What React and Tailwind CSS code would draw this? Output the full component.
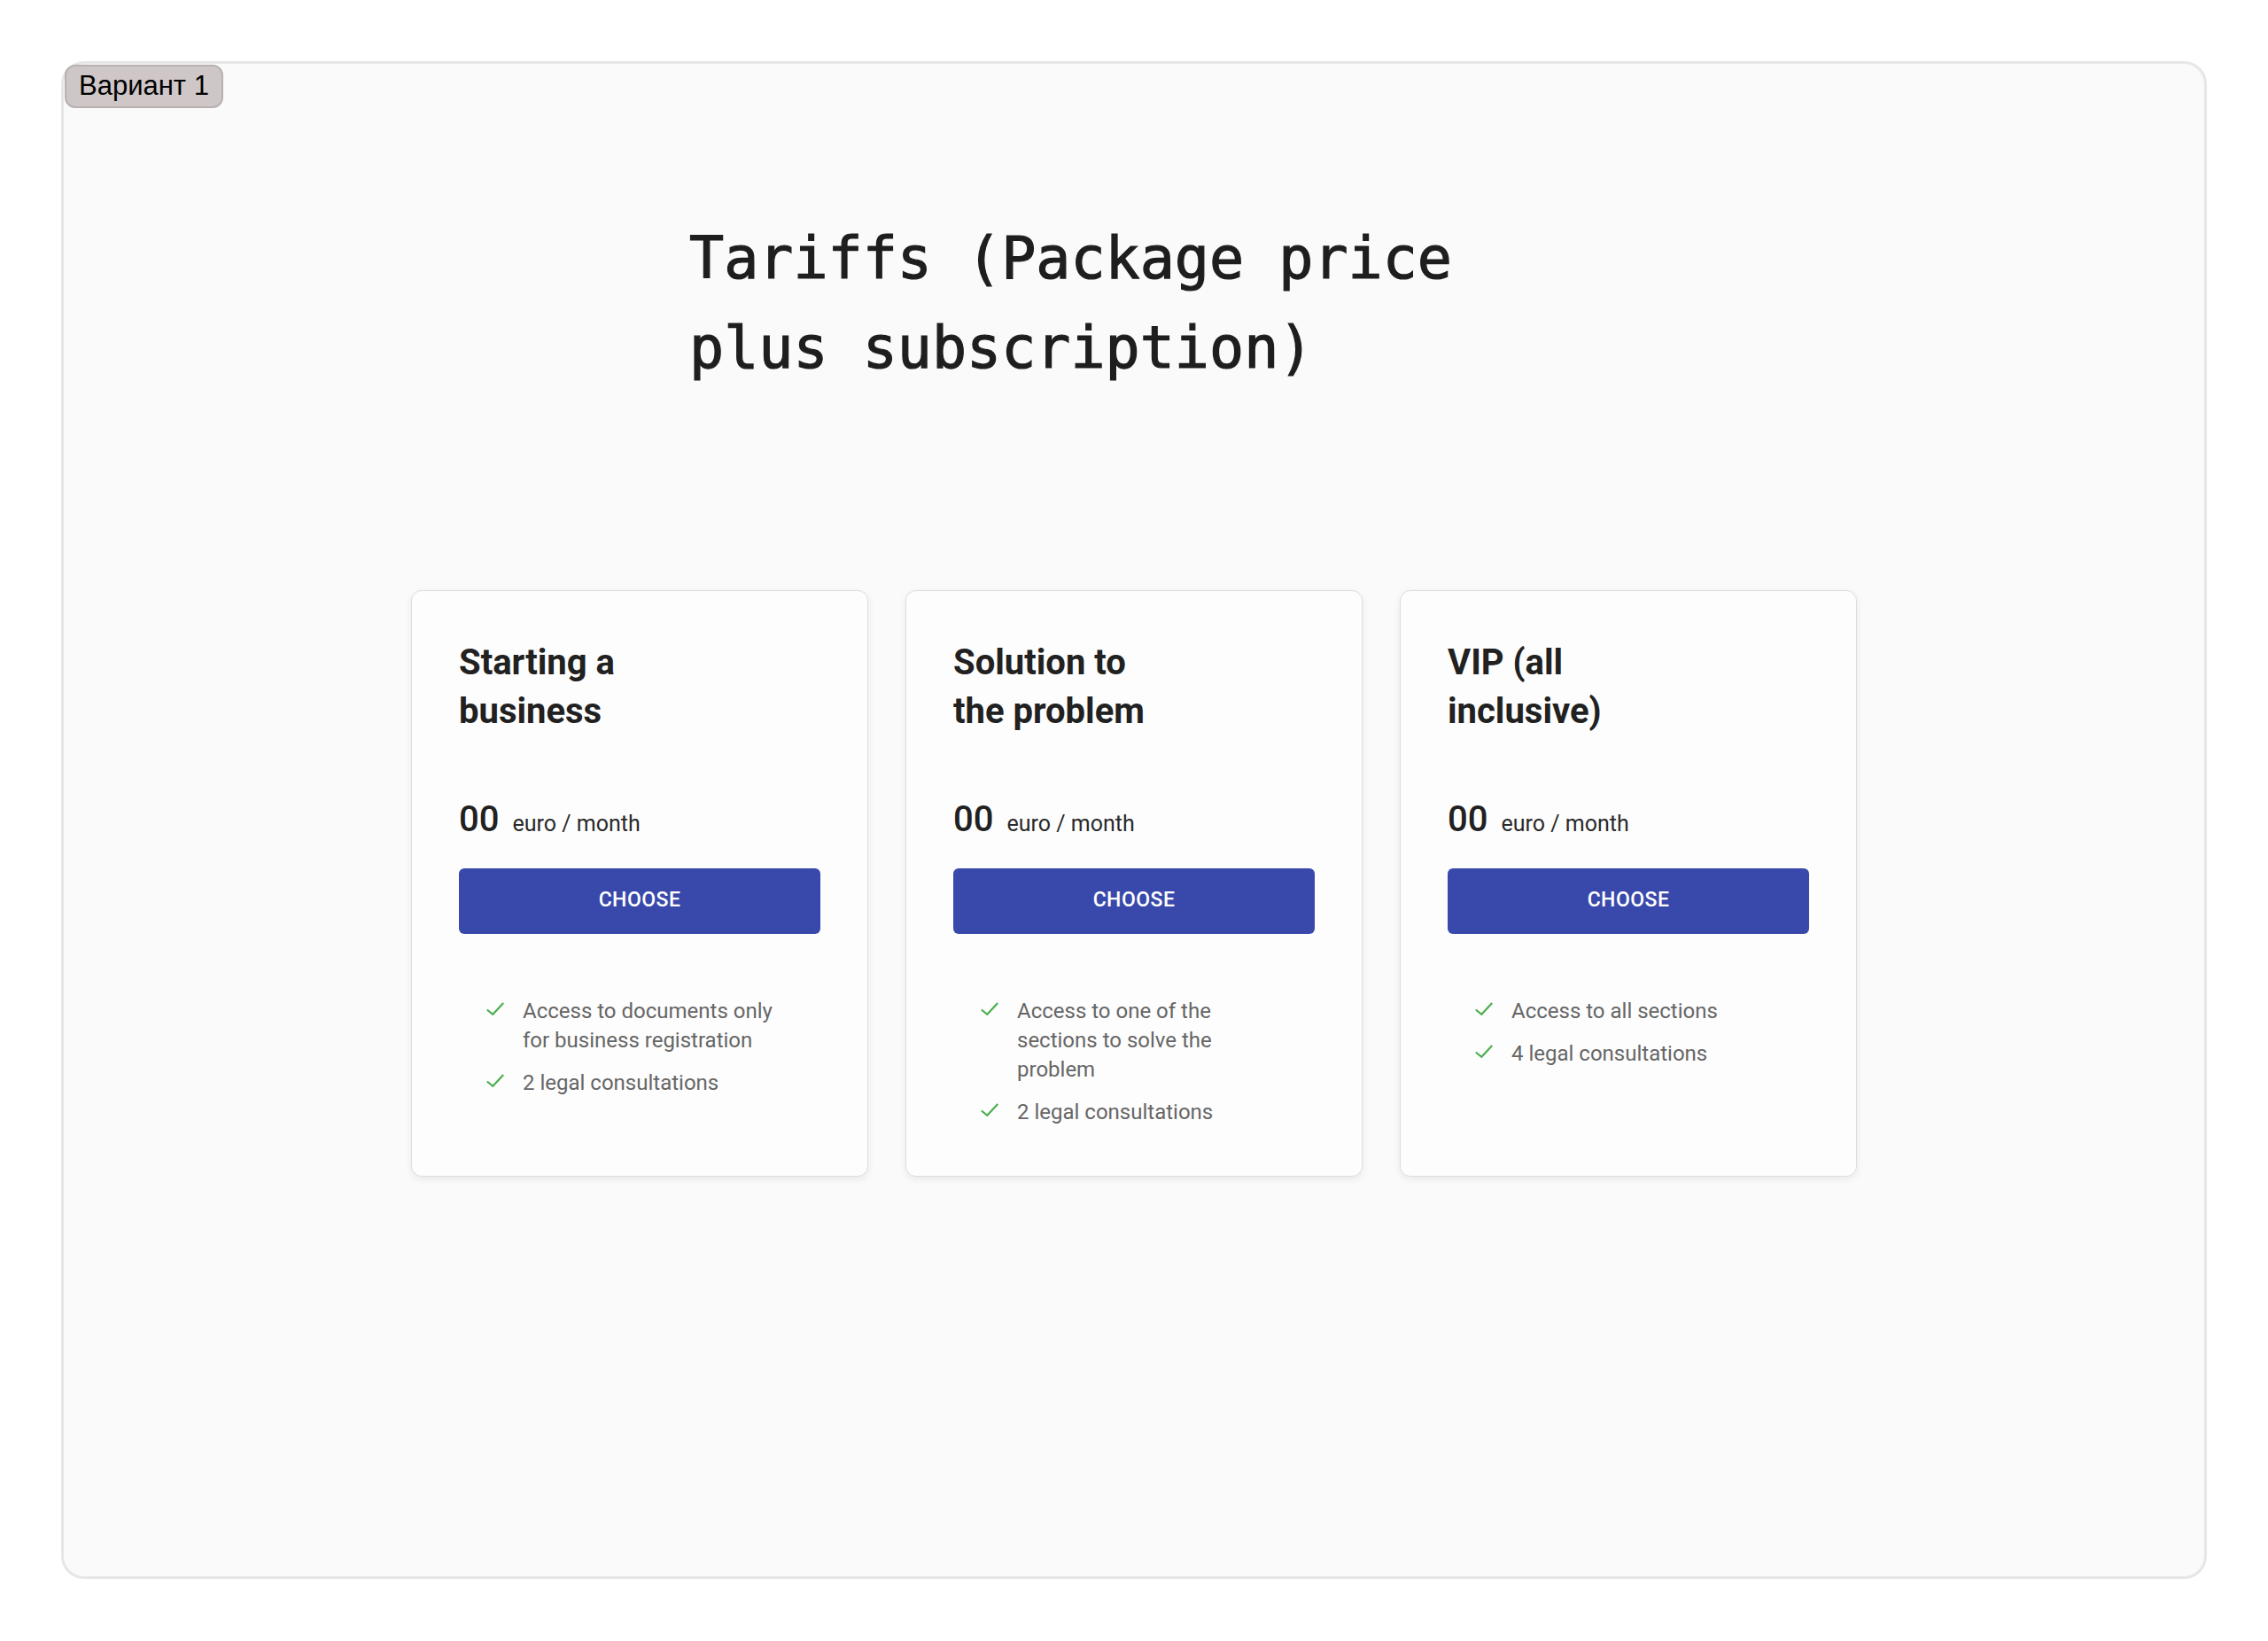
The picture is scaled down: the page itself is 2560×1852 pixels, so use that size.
import React from "react";

const plans = [
  {
    title: ["Starting a", "business"],
    features: ["Access to documents only for business registration", "2 legal consultations"],
  },
  {
    title: ["Solution to", "the problem"],
    features: ["Access to one of the sections to solve the problem", "2 legal consultations"],
  },
  {
    title: ["VIP (all", "inclusive)"],
    features: ["Access to all sections", "4 legal consultations"],
  },
];

function Check() {
  return (
    <svg width="20" height="15" viewBox="0 0 20 15" className="shrink-0 mt-[6px]" fill="none">
      <polyline points="0.8,8.5 7.3,13.8 19.2,1" stroke="#4caf50" strokeWidth="2.2" strokeLinecap="butt" strokeLinejoin="miter" />
    </svg>
  );
}

function Card({ plan }) {
  return (
    <div className="w-[516px] flex flex-col border border-[#dedede] rounded-[12px] bg-[#fdfdfd] shadow-[0_3px_8px_rgba(0,0,0,0.07)] p-[53px] pb-[55px] font-['Roboto',sans-serif]">
      <h2 className="text-[40px] leading-[55px] font-bold text-[#212121]">
        {plan.title[0]}
        <br />
        {plan.title[1]}
      </h2>
      <div className="mt-[73px] flex items-baseline">
        <span className="text-[40px] leading-[44px] font-medium text-[#212121]">00</span>
        <span className="ml-[15px] text-[25px] text-[#2a2a2a]">euro / month</span>
      </div>
      <button className="mt-[31px] h-[74px] w-full rounded-[6px] bg-[#3949ab] text-white text-[23px] font-medium tracking-[0.02em]">
        CHOOSE
      </button>
      <ul className="mt-[71px] pl-[31px] pr-[41px] flex flex-col gap-[15px]">
        {plan.features.map((f) => (
          <li key={f} className="flex items-start gap-[21px]">
            <Check />
            <span className="text-[24px] leading-[33px] text-[#666666]">{f}</span>
          </li>
        ))}
      </ul>
    </div>
  );
}

export default function App() {
  return (
    <div className="min-h-[1852px] bg-white p-[69px] pb-[70px]">
      <div className="relative h-[1713px] rounded-[26px] border-[3px] border-[#e6e6e6] bg-[#fafafa]">
        <div className="absolute left-[1px] top-[1px] h-[49px] px-[14px] flex items-center rounded-[12px] border-2 border-[#b9b0b0] bg-[#cfc7c7] font-['Liberation_Sans',Arial,sans-serif] text-[31px] text-black">
          Вариант 1
        </div>
        <div className="w-[1004px] mx-auto pt-[169px]">
          <h1 className="font-['DejaVu_Sans_Mono','Liberation_Mono',monospace] text-[65px] leading-[101px] text-[#1e1e1e] [-webkit-text-stroke:1.2px_#1e1e1e]">
            Tariffs (Package price plus subscription)
          </h1>
        </div>
        <div className="mt-[223px] flex justify-center gap-[42px]">
          {plans.map((p) => (
            <Card key={p.title[0]} plan={p} />
          ))}
        </div>
      </div>
    </div>
  );
}
